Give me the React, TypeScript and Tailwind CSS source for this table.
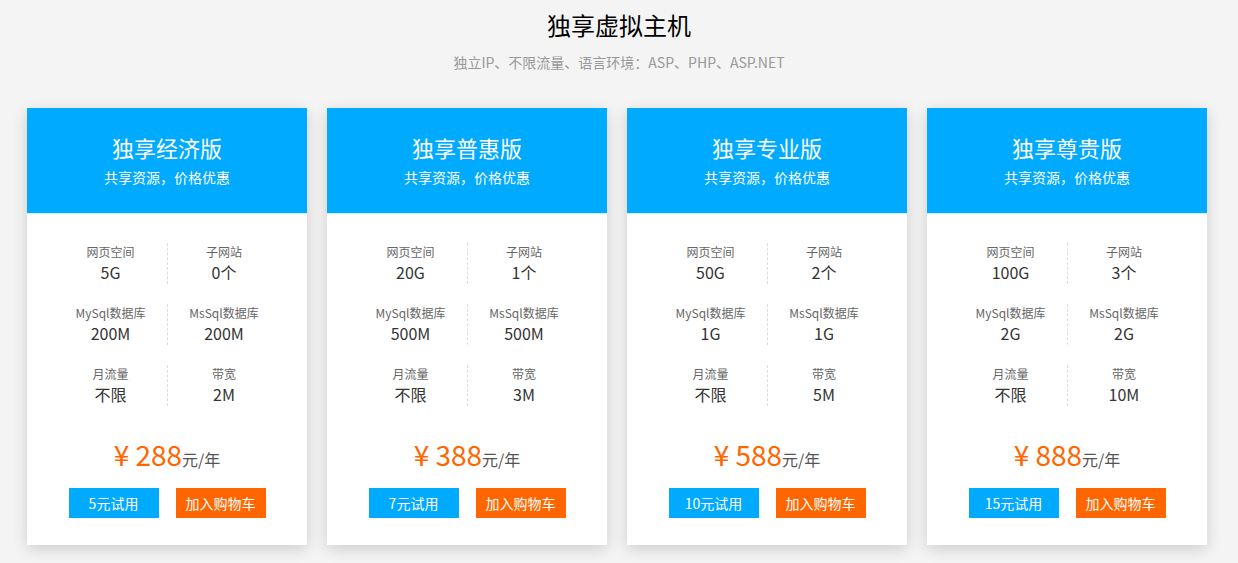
import React from "react";

const plans = [
  { name: "独享经济版", space: "5G", sites: "0个", db: "200M", bw: "2M", price: "288", trial: "5元试用" },
  { name: "独享普惠版", space: "20G", sites: "1个", db: "500M", bw: "3M", price: "388", trial: "7元试用" },
  { name: "独享专业版", space: "50G", sites: "2个", db: "1G", bw: "5M", price: "588", trial: "10元试用" },
  { name: "独享尊贵版", space: "100G", sites: "3个", db: "2G", bw: "10M", price: "888", trial: "15元试用" },
];

function Cell({ label, value, divider }: { label: string; value: string; divider?: boolean }) {
  return (
    <div className={"flex h-[41px] flex-col items-center " + (divider ? "border-l border-dashed border-[#dddddd]" : "")}>
      <div className="text-[12px] leading-[18px] text-[#666666]">{label}</div>
      <div className="text-[16px] leading-[22px] text-[#333333]">{value}</div>
    </div>
  );
}

function PlanCard({ plan }: { plan: (typeof plans)[number] }) {
  return (
    <div className="w-[280px] bg-white shadow-[0_4px_14px_rgba(0,0,0,0.16)]">
      <div className="h-[106px] border-b border-[#cdeeff] bg-[#00aaff] pt-[24px] text-center text-white">
        <div className="text-[22px] leading-[30px]">{plan.name}</div>
        <div className="mt-[5px] text-[14px] leading-[20px]">共享资源，价格优惠</div>
      </div>
      <div className="px-[27px] pt-[29px]">
        <div className="grid grid-cols-2 gap-y-[20px]">
          <Cell label="网页空间" value={plan.space} />
          <Cell label="子网站" value={plan.sites} divider />
          <Cell label="MySql数据库" value={plan.db} />
          <Cell label="MsSql数据库" value={plan.db} divider />
          <Cell label="月流量" value="不限" />
          <Cell label="带宽" value={plan.bw} divider />
        </div>
      </div>
      <div className="mt-[30px] flex items-baseline justify-center">
        <span className="text-[28px] leading-[36px] text-[#ff6600]">¥ {plan.price}</span>
        <span className="text-[16px] text-[#555555]">元/年</span>
      </div>
      <div className="mt-[16px] flex justify-center gap-[17px] pb-[27px]">
        <button className="h-[30px] w-[90px] bg-[#00aaff] text-[14px] text-white">{plan.trial}</button>
        <button className="h-[30px] w-[90px] bg-[#ff6600] text-[14px] text-white">加入购物车</button>
      </div>
    </div>
  );
}

export default function App() {
  return (
    <div
      className="min-h-[563px] bg-[#f4f4f4] pt-[10px]"
      style={{ fontFamily: '"Noto Sans CJK SC", "Noto Sans", sans-serif' }}
    >
      <h1 className="text-center text-[24px] leading-[30px] text-black">独享虚拟主机</h1>
      <p className="mt-[12px] text-center text-[14px] leading-[20px] text-[#999999]">
        独立IP、不限流量、语言环境：ASP、PHP、ASP.NET
      </p>
      <div className="mt-[36px] flex gap-[20px] pl-[27px]">
        {plans.map((p) => (
          <PlanCard key={p.name} plan={p} />
        ))}
      </div>
    </div>
  );
}
